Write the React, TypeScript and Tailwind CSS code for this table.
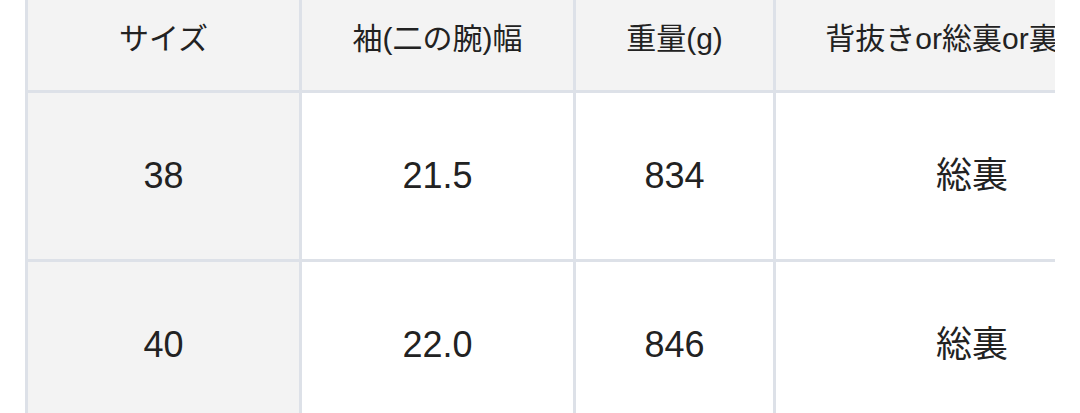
import React from 'react';

const headers = ['サイズ', '袖(二の腕)幅', '重量(g)', '背抜きor総裏or裏なし'];

const rows = [
  ['38', '21.5', '834', '総裏'],
  ['40', '22.0', '846', '総裏'],
];

const App: React.FC = () => {
  return (
    <div
      className="w-[1080px] h-[413px] overflow-hidden bg-white pl-[25px]"
      style={{ fontFamily: '"Liberation Sans", "Noto Sans CJK JP", sans-serif' }}
    >
      <div className="w-[1030px] overflow-hidden -mt-[17px]">
        <div className="grid w-max grid-cols-[271px_271px_197px_392px] auto-rows-[166px] grid-rows-[104px] gap-[3px] bg-[#dde1e8] p-[3px] text-[#222]">
          {headers.map((h) => (
            <div
              key={h}
              className="flex items-center justify-center whitespace-nowrap bg-[#f3f3f3] text-[30px]"
            >
              {h}
            </div>
          ))}
          {rows.map((row) =>
            row.map((cell, i) => (
              <div
                key={row[0] + '-' + i}
                className={`flex items-center justify-center text-[36px] ${i === 0 ? 'bg-[#f3f3f3]' : 'bg-white'}`}
              >
                {cell}
              </div>
            ))
          )}
        </div>
      </div>
    </div>
  );
};

export default App;
